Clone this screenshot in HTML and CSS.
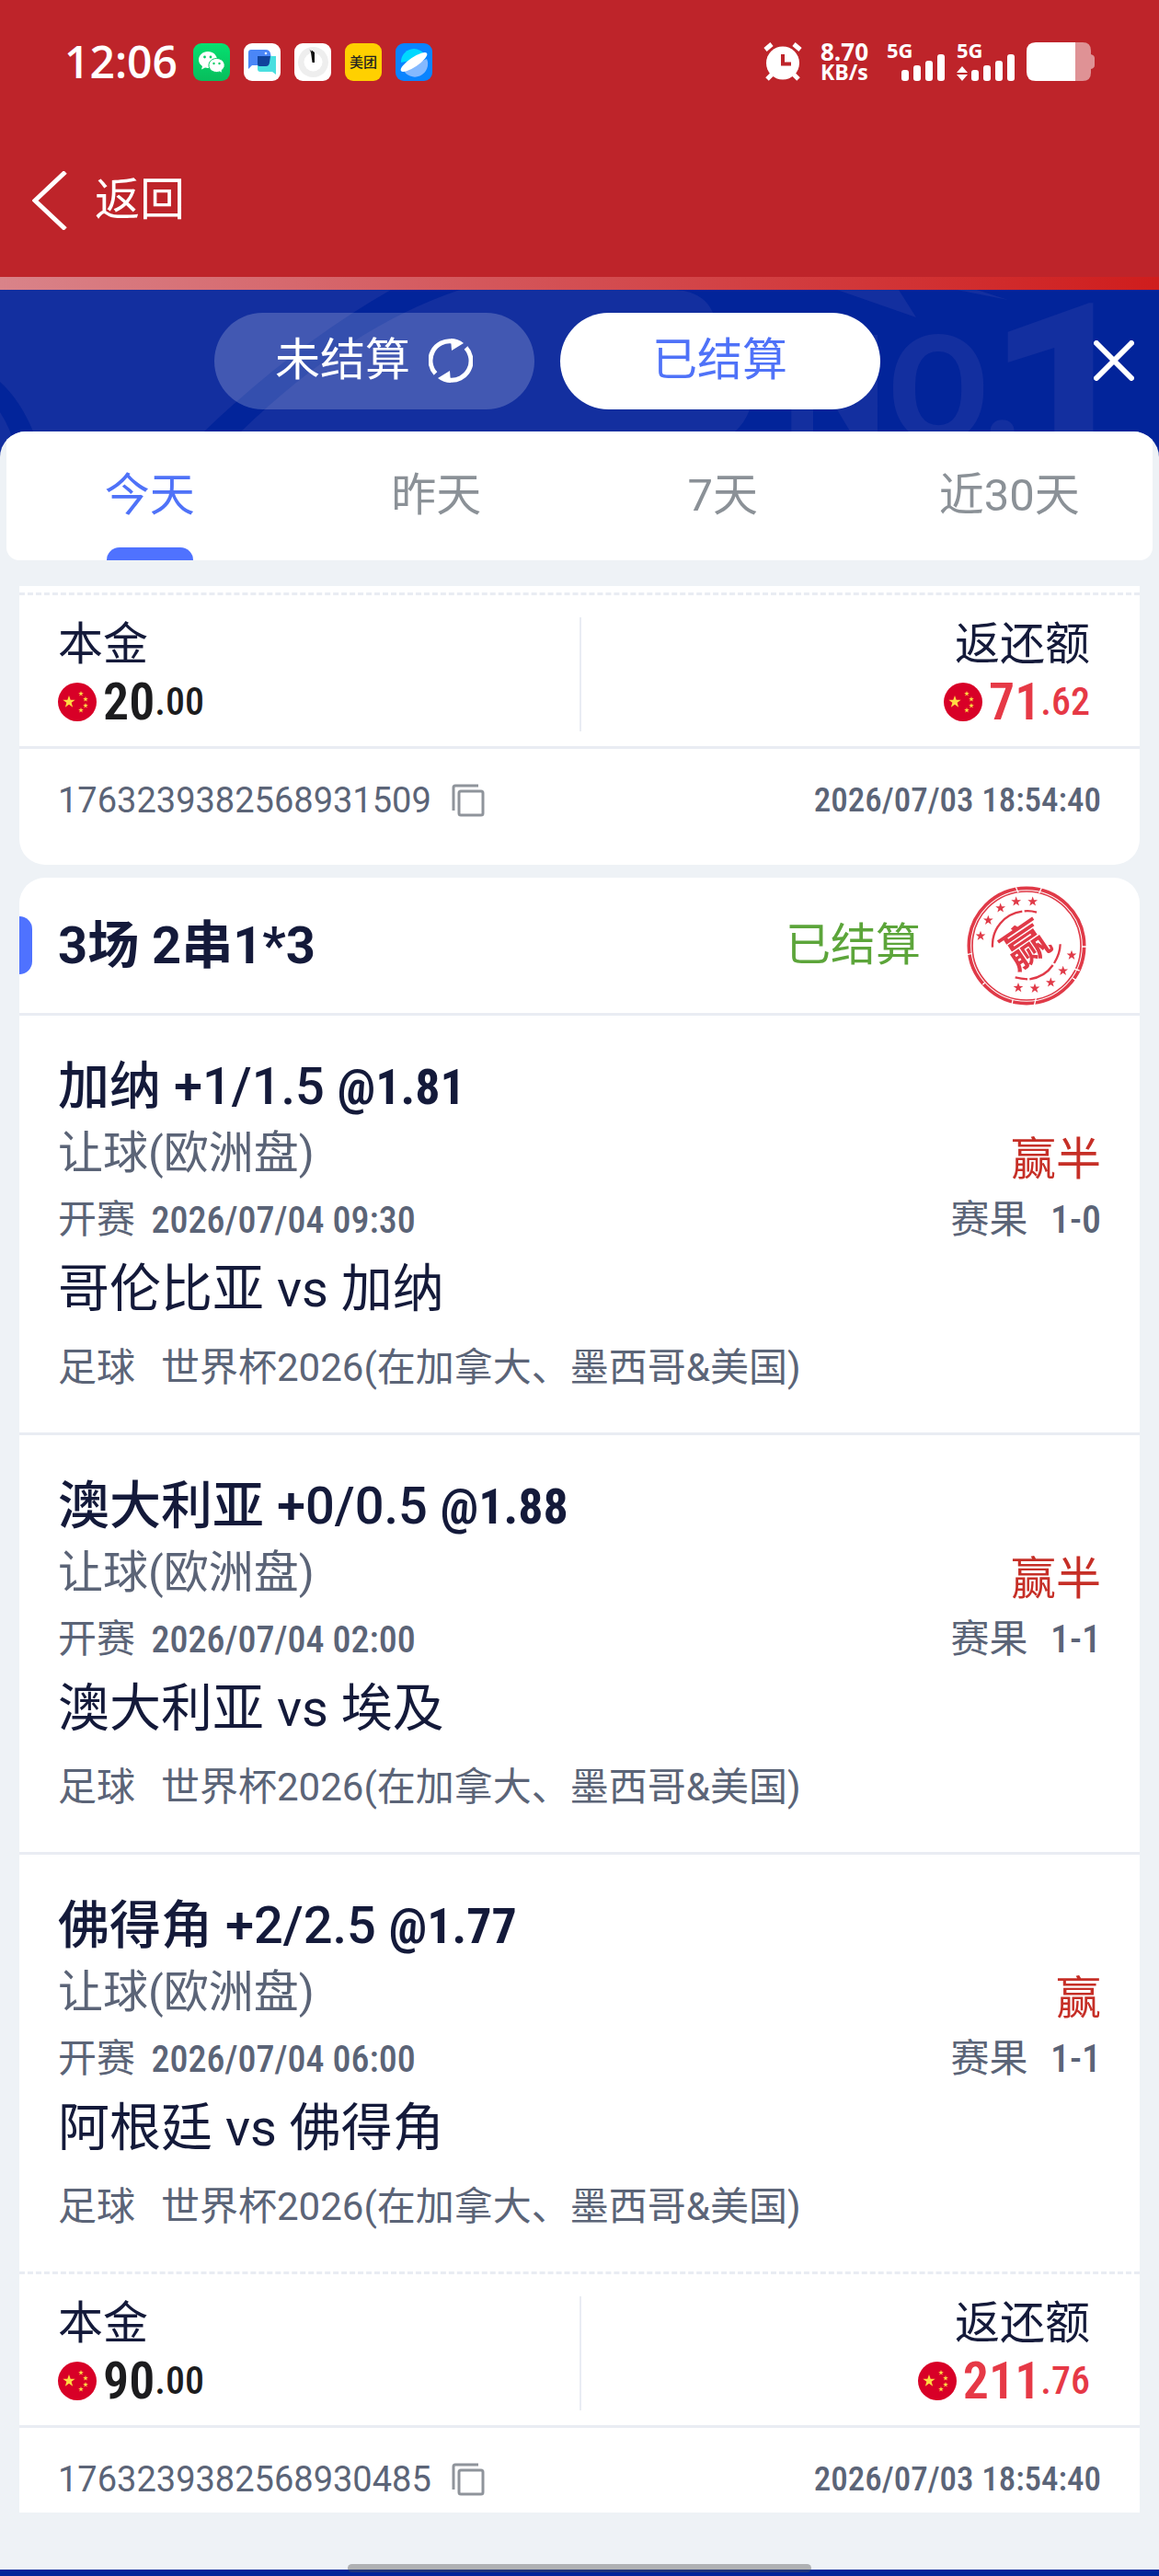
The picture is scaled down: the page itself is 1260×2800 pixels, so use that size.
FILE: index.html
```
<!DOCTYPE html>
<html lang="zh-CN">
<head>
  <meta charset="UTF-8">
  <meta name="viewport" content="width=device-width, initial-scale=1.0">
  <title>已结算</title>
  <link rel="stylesheet" href="styles.css">
</head>
<body>

  <!-- shared icons -->
  <svg class="defs" width="0" height="0" aria-hidden="true">
    <symbol id="star" viewBox="-10 -10 20 20">
      <path d="M0-10 2.4-3.2 9.5-3.1 3.8 1.2 5.9 8.1 0 4-5.9 8.1-3.8 1.2-9.5-3.1-2.4-3.2Z"/>
    </symbol>
    <symbol id="flag" viewBox="0 0 42 42">
      <circle cx="21" cy="21" r="21" fill="#d80027"/>
      <g fill="#ffda44">
        <use href="#star" x="5" y="14" width="14" height="14"/>
        <use href="#star" x="22" y="9" width="6" height="6"/>
        <use href="#star" x="27" y="15" width="6" height="6"/>
        <use href="#star" x="27" y="22" width="6" height="6"/>
        <use href="#star" x="22" y="27" width="6" height="6"/>
      </g>
    </symbol>
    <symbol id="copy" viewBox="0 0 36 36">
      <path d="M29 2H4Q2 2 2 4V29" fill="none" stroke="#8f949b" stroke-width="3"/>
      <rect x="8" y="8" width="26" height="26" rx="2" fill="none" stroke="#8f949b" stroke-width="3"/>
    </symbol>
  </svg>

  <header class="top">
    <div class="status">
      <span class="clock">12:06</span>
      <div class="apps">
        <svg viewBox="0 0 40 41">
          <defs><linearGradient id="wx" x2="0" y2="1"><stop stop-color="#05e070"/><stop offset="1" stop-color="#08bd5c"/></linearGradient></defs>
          <rect width="40" height="41" rx="9" fill="url(#wx)"/>
          <path d="M16 9C10.300 9 6 13 6 18c0 3 1.500 5.300 4 7l-1 3.500 4-2c1.200.3 2 .4 3 .4 5.600 0 10-4 10-9S21.600 9 16 9Z" fill="#fff"/>
          <path d="M25.500 16.500c-4.800 0-8.500 3.300-8.500 7.500s3.700 7.500 8.500 7.500c1.300 0 2.200-.2 3.200-.6l3 1.600-.7-3c2-1.500 3.200-3.300 3.200-5.500 0-4.200-3.900-7.500-8.700-7.500Z" fill="#fff" stroke="#08cc66"/>
          <g fill="#08cc66"><circle cx="12.500" cy="15" r="1.400"/><circle cx="19" cy="15" r="1.400"/><circle cx="22.500" cy="22" r="1.200"/><circle cx="28.500" cy="22" r="1.200"/></g>
        </svg>
        <svg viewBox="0 0 40 41">
          <rect width="40" height="41" rx="9" fill="#fff"/>
          <path d="M8 7H24q4 0 5 4l1 5v8H9l-4 4V10q0-3 3-3Z" fill="#4a86f7"/>
          <path d="M15 14H35V34l-4-3H18q-3 0-3-3Z" fill="#4adfe0"/>
          <path d="M15 14H29l-1 7q-.5 4-4 4H17q-2 0-2-2Z" fill="#10439c"/>
          <circle cx="24" cy="11" r="1.300" fill="#fff"/>
        </svg>
        <svg viewBox="0 0 40 41">
          <rect width="40" height="41" rx="9" fill="#fff"/>
          <circle cx="20.500" cy="20.500" r="16.500" fill="#eee"/>
          <circle cx="20.500" cy="20.500" r="10" fill="#fff"/>
          <path d="m16.500 6.500 2 2.500.3-1.500L22 10v11h-2.500L18 10Z" fill="#111"/>
        </svg>
        <svg viewBox="0 0 40 41">
          <rect width="40" height="41" rx="9" fill="#ffd000"/>
          <text class="meituan" x="20" y="26" text-anchor="middle">美团</text>
        </svg>
        <svg viewBox="0 0 40 41">
          <rect width="40" height="41" rx="9" fill="#0a84ff"/>
          <path d="M6 21a14 14 0 0 1 27-6Z" fill="#00d8ff"/>
          <path d="M8 28 34 17a14 14 0 0 1-26 11Z" fill="#84b9ff"/>
          <ellipse cx="20" cy="20.500" rx="17" ry="5" fill="#fff" transform="rotate(-34 20 20.500)"/>
        </svg>
      </div>

      <div class="signals">
        <svg class="alarm" width="42" height="42" viewBox="0 0 42 42">
          <circle cx="21" cy="22.500" r="18" fill="#fff"/>
          <path d="m2 8 7-6M40 8l-7-6M4 40l6-6M38 40l-6-6" stroke="#fff" stroke-width="5"/>
          <path d="M21 13V23.500H30" fill="none" stroke="#be242a" stroke-width="4"/>
        </svg>
        <div class="net"><span class="speed">8.70</span><span>KB/s</span></div>
        <svg class="bars" width="64" height="42" viewBox="0 0 64 42">
          <text x="0" y="17">5G</text>
          <rect x="16" y="30" width="8" height="12" rx="3"/><rect x="29" y="25" width="8" height="17" rx="3"/>
          <rect x="42" y="20" width="8" height="22" rx="3"/><rect x="55" y="13" width="8" height="29" rx="3"/>
        </svg>
        <svg class="bars" width="64" height="42" viewBox="0 0 64 42">
          <text x="0" y="17">5G</text>
          <path d="m6 26 6 7H0ZM0 35h12l-6 7Z"/>
          <rect x="16" y="30" width="8" height="12" rx="3"/><rect x="29" y="25" width="8" height="17" rx="3"/>
          <rect x="42" y="20" width="8" height="22" rx="3"/><rect x="55" y="13" width="8" height="29" rx="3"/>
        </svg>
        <svg class="battery" width="74" height="42" viewBox="0 0 74 42">
          <path d="M53 0h8q9 0 9 9v4q4 1 4 4v8q0 3-4 4v4q0 9-9 9h-8Z" fill="#fff" opacity=".5"/>
          <path d="M53 0H10Q0 0 0 10V32Q0 42 10 42H53Z" fill="#fff"/>
        </svg>
      </div>
    </div>

    <a class="back" href="#">
      <svg width="40" height="64" viewBox="0 0 40 64"><path d="M36 1 3 32 36 63" fill="none" stroke="#fff" stroke-width="5"/></svg>
      返回
    </a>
  </header>
  <div class="strip"></div>

  <main class="sheet">
    <svg class="pattern" viewBox="0 0 1260 190" preserveAspectRatio="xMidYMin slice" aria-hidden="true">
      <path d="M0 0H735Q765 2 775 25L815 80V130Q810 145 797 156L770 190H0Z"/>
      <path d="M425 0Q320 60 222 154L190 190H232L262 154Q380 40 500 0Z" class="dark"/>
      <path d="M0 100Q22 120 36 154L44 190H20L11 154Q6 142 0 133Z" class="dark"/>
      <path d="M910 0H977L996 30ZM1040 0H1062L1096 11Z"/>
      <text x="850" y="164" font-size="162">NO.</text>
      <text x="1071" y="228" font-size="300">1</text>
    </svg>

    <div class="switcher">
      <div class="pills">
        <button type="button" class="pill">
          未结算
          <svg width="48" height="48" viewBox="0 0 48 48">
            <g id="half"><path d="M26 3A21 21 0 0 0 7.500 38" fill="none" stroke="#fff" stroke-width="5"/><path d="M24 0Q32 0 38 5L25 13Z" fill="#fff"/></g>
            <use href="#half" transform="rotate(180 24 24)"/>
          </svg>
        </button>
        <button type="button" class="pill active">已结算</button>
      </div>
      <button type="button" class="close" aria-label="关闭">
        <svg width="44" height="44" viewBox="0 0 44 44"><path d="M3 3 41 41M41 3 3 41" stroke="#fff" stroke-width="6" stroke-linecap="round"/></svg>
      </button>
    </div>

    <div class="panel">
      <nav class="tabs">
        <button type="button" class="tab active">今天</button>
        <button type="button" class="tab">昨天</button>
        <button type="button" class="tab">7天</button>
        <button type="button" class="tab">近30天</button>
      </nav>

      <section class="list">
        <article class="card tail">
          <div class="summary">
            <div class="cell">
              <div class="label">本金</div>
              <div class="amount"><svg><use href="#flag"/></svg><b>20</b><span>.00</span></div>
            </div>
            <div class="cell right">
              <div class="label">返还额</div>
              <div class="amount"><svg><use href="#flag"/></svg><b>71</b><span>.62</span></div>
            </div>
          </div>
          <div class="order">
            <span>1763239382568931509</span>
            <button type="button" class="copy" aria-label="复制"><svg width="36" height="36"><use href="#copy"/></svg></button>
            <time class="num">2026/07/03 18:54:40</time>
          </div>
        </article>

        <article class="card head">
          <div class="title">
            <h2>3场 2串1*3</h2>
            <span class="settled">已结算</span>
            <svg class="stamp" width="130" height="130" viewBox="0 0 390 390" fill="#e03a48">
              <g fill="none" stroke="#e03a48">
                <circle cx="195" cy="195" r="188" stroke-width="11"/>
                <circle cx="195" cy="195" r="177" stroke-width="5"/>
                <path d="M84 200A111 111 0 0 1 181 83M188 82Q208 80 228 86M305 190Q304 222 285 252M281 258Q254 297 205 304M198 304Q178 303 158 298" stroke-width="7"/>
              </g>
              <!-- worn spots on the rings -->
              <path d="m160 4 8 18M244 6l-8 18M375 198h15M0 224l18-4M368 276l-18-6M226 366l-6 24M60 314l-8 8M150 372l-3 16M345 300l12 8" stroke="#fff" stroke-width="4"/>
              <use href="#star" x="28" y="146" width="34" height="34"/>
              <use href="#star" x="53" y="95" width="34" height="34"/>
              <use href="#star" x="93" y="55" width="34" height="34"/>
              <use href="#star" x="144" y="34" width="34" height="34"/>
              <use href="#star" x="198" y="34" width="34" height="34"/>
              <use href="#star" x="325" y="209" width="34" height="34"/>
              <use href="#star" x="297" y="260" width="34" height="34"/>
              <use href="#star" x="257" y="298" width="34" height="34"/>
              <use href="#star" x="205" y="317" width="34" height="34"/>
              <use href="#star" x="151" y="315" width="34" height="34"/>
              <text x="192" y="246" text-anchor="middle" transform="rotate(-34 192 192)">赢</text>
            </svg>
          </div>

          <div class="match">
            <h3>加纳 +1/1.5 <span class="num">@1.81</span></h3>
            <div class="row market"><span>让球(欧洲盘)</span><span class="win">赢半</span></div>
            <div class="row kickoff"><span>开赛 <time class="num">2026/07/04 09:30</time></span><span>赛果 <b class="num score">1-0</b></span></div>
            <div class="teams">哥伦比亚 vs 加纳</div>
            <div class="league"><span>足球</span><span>世界杯2026(在加拿大、墨西哥&amp;美国)</span></div>
          </div>
          <div class="match">
            <h3>澳大利亚 +0/0.5 <span class="num">@1.88</span></h3>
            <div class="row market"><span>让球(欧洲盘)</span><span class="win">赢半</span></div>
            <div class="row kickoff"><span>开赛 <time class="num">2026/07/04 02:00</time></span><span>赛果 <b class="num score">1-1</b></span></div>
            <div class="teams">澳大利亚 vs 埃及</div>
            <div class="league"><span>足球</span><span>世界杯2026(在加拿大、墨西哥&amp;美国)</span></div>
          </div>
          <div class="match">
            <h3>佛得角 +2/2.5 <span class="num">@1.77</span></h3>
            <div class="row market"><span>让球(欧洲盘)</span><span class="win">赢</span></div>
            <div class="row kickoff"><span>开赛 <time class="num">2026/07/04 06:00</time></span><span>赛果 <b class="num score">1-1</b></span></div>
            <div class="teams">阿根廷 vs 佛得角</div>
            <div class="league"><span>足球</span><span>世界杯2026(在加拿大、墨西哥&amp;美国)</span></div>
          </div>

          <div class="summary">
            <div class="cell">
              <div class="label">本金</div>
              <div class="amount"><svg><use href="#flag"/></svg><b>90</b><span>.00</span></div>
            </div>
            <div class="cell right">
              <div class="label">返还额</div>
              <div class="amount"><svg><use href="#flag"/></svg><b>211</b><span>.76</span></div>
            </div>
          </div>
          <div class="order">
            <span>1763239382568930485</span>
            <button type="button" class="copy" aria-label="复制"><svg width="36" height="36"><use href="#copy"/></svg></button>
            <time class="num">2026/07/03 18:54:40</time>
          </div>
        </article>
      </section>
    </div>
  </main>

  <div class="home-bar"></div>
</body>
</html>
```
FILE: styles.css
```
* {
  box-sizing: border-box;
}

body {
  margin: 0;
  min-height: 100vh;
  display: flex;
  flex-direction: column;
  background: #02249a;
  color: #141a3a;
  font-family: Roboto, "Noto Sans CJK SC", sans-serif;
  font-size: 49px;
  line-height: 60px;
}

button {
  padding: 0;
  border: none;
  background: none;
  color: inherit;
  font: inherit;
  cursor: pointer;
}

svg {
  display: block;
  flex: none;
}

h2,
h3 {
  margin: 0;
  font-size: 56px;
}

.defs {
  position: absolute;
}

.num {
  font-family: "Roboto Condensed", Roboto, sans-serif;
  font-weight: 500;
}

/* status bar + back */
.top {
  background: #be242a;
  color: #fff;
}

.status {
  display: flex;
  align-items: center;
  height: 134px;
  padding: 0 70px;
}

.clock {
  font: 600 48px/60px "Open Sans", sans-serif;
}

.apps {
  display: flex;
  gap: 15px;
  margin-left: 17px;
}

.apps svg {
  width: 40px;
  height: 41px;
}

.meituan {
  font-size: 15px;
  font-weight: 500;
  fill: #222;
}

.signals {
  display: flex;
  align-items: center;
  margin-left: auto;
}

.net {
  display: flex;
  flex-direction: column;
  margin: 0 20px;
  font: 700 23px/22px "Open Sans", sans-serif;
}

.speed {
  font-size: 26px;
}

.bars {
  margin-right: 12px;
  overflow: visible;
  fill: #fff;
  font: 700 22px "Open Sans", sans-serif;
}

.back {
  display: flex;
  align-items: center;
  gap: 28px;
  height: 167px;
  padding-left: 35px;
  color: inherit;
  text-decoration: none;
}

.strip {
  height: 14px;
  background: linear-gradient(90deg, #d98389, #d34e52 50%, #cf1d1d);
}

/* blue sheet */
.sheet {
  position: relative;
  flex: 1;
  display: flex;
  flex-direction: column;
}

.pattern {
  position: absolute;
  top: 0;
  left: 0;
  width: 100%;
  height: 190px;
  fill: #132f9f;
  font-weight: 700;
}

.pattern .dark {
  fill: #02249a;
}

.switcher {
  position: relative;
  display: flex;
  align-items: center;
  height: 154px;
}

.pills {
  flex: 1;
  display: flex;
  justify-content: center;
  gap: 28px;
}

.pill {
  display: flex;
  align-items: center;
  justify-content: center;
  gap: 20px;
  width: 348px;
  height: 105px;
  border-radius: 53px;
  background: rgba(255, 255, 255, 0.2);
  color: #fff;
}

.pill.active {
  background: #fff;
  color: #4f72f8;
}

.close {
  margin-right: 27px;
}

.panel {
  position: relative;
  flex: 1;
  border-radius: 28px 28px 0 0;
  background: #eef2f6;
  overflow: hidden;
}

.tabs {
  display: flex;
  height: 140px;
  margin: 0 7px 28px;
  border-radius: 0 0 14px 14px;
  background: #fff;
  color: #8b9197;
}

.tab {
  position: relative;
  flex: 1;
}

.tab.active {
  color: #4f72f8;
}

.tab.active::after {
  content: "";
  position: absolute;
  bottom: 0;
  left: 50%;
  width: 94px;
  height: 14px;
  margin-left: -47px;
  border-radius: 14px 14px 0 0;
  background: #4f72ff;
}

/* bet cards */
.list {
  display: flex;
  flex-direction: column;
  gap: 14px;
  margin: 0 21px;
}

.card {
  background: #fff;
}

.card.tail {
  padding-top: 7px;
  border-radius: 0 0 28px 28px;
}

.card.head {
  border-radius: 28px 28px 0 0;
}

.title {
  position: relative;
  display: flex;
  align-items: center;
  height: 150px;
  padding: 0 58px 0 42px;
  border-bottom: 3px solid #e9ecf3;
}

.title::before {
  content: "";
  position: absolute;
  left: 0;
  width: 14px;
  height: 63px;
  border-radius: 0 14px 14px 0;
  background: #4f72ff;
}

.settled {
  margin: 0 50px 0 auto;
  color: #5ca53a;
}

.stamp {
  font-size: 148px;
  font-weight: 700;
}

.match {
  padding: 42px 42px 35px;
}

.match + .match {
  border-top: 3px solid #e9ecf3;
}

.match h3 {
  height: 70px;
  font-weight: 500;
  line-height: 70px;
}

.match h3 .num {
  font-weight: 700;
  font-size: 54px;
}

.row {
  display: flex;
  justify-content: space-between;
}

.market {
  height: 75px;
  color: #5b6477;
  line-height: 75px;
}

.win {
  color: #c62f27;
  line-height: 90px;
}

.kickoff {
  height: 70px;
  color: #5b6477;
  font-size: 42px;
  line-height: 70px;
}

.kickoff .num {
  margin-left: 7px;
  font-size: 40px;
}

.kickoff .score {
  margin-left: 14px;
  font-size: 42px;
}

.teams {
  font-size: 56px;
  line-height: 80px;
}

.league {
  display: flex;
  gap: 28px;
  margin-top: 11px;
  color: #5b6477;
  font-size: 42px;
  line-height: 70px;
}

.summary {
  display: flex;
  padding: 24px 0 16px;
  border-top: 3px dashed #e9ecf3;
}

.cell {
  width: 50%;
  padding-left: 42px;
}

.cell.right {
  padding: 0 54px 0 0;
  border-left: 2px solid #e9ecf3;
  text-align: right;
}

.label {
  line-height: 60px;
}

.amount {
  display: flex;
  align-items: center;
  height: 64px;
  color: #1c1c1e;
  font-family: "Roboto Condensed", Roboto, sans-serif;
  font-size: 42px;
  font-weight: 500;
}

.amount svg {
  width: 42px;
  height: 42px;
  margin-right: 7px;
}

.amount b {
  font-size: 56px;
  font-weight: 600;
}

.right .amount {
  justify-content: flex-end;
  color: #e63946;
}

.order {
  display: flex;
  align-items: center;
  padding: 28px 42px 42px;
  border-top: 3px solid #e9ecf3;
  color: #5b6477;
  font-size: 38px;
  line-height: 56px;
}

.head .order {
  padding-bottom: 8px;
}

.copy {
  margin-left: 22px;
}

.order time {
  margin-left: auto;
  font-size: 37px;
}

/* gesture handle at the bottom edge */
.home-bar {
  position: relative;
  height: 7px;
}

.home-bar::before {
  content: "";
  position: absolute;
  bottom: 4px;
  left: 30%;
  width: 40%;
  height: 9px;
  border-radius: 5px;
  background: rgba(80, 80, 80, 0.4);
}
```
